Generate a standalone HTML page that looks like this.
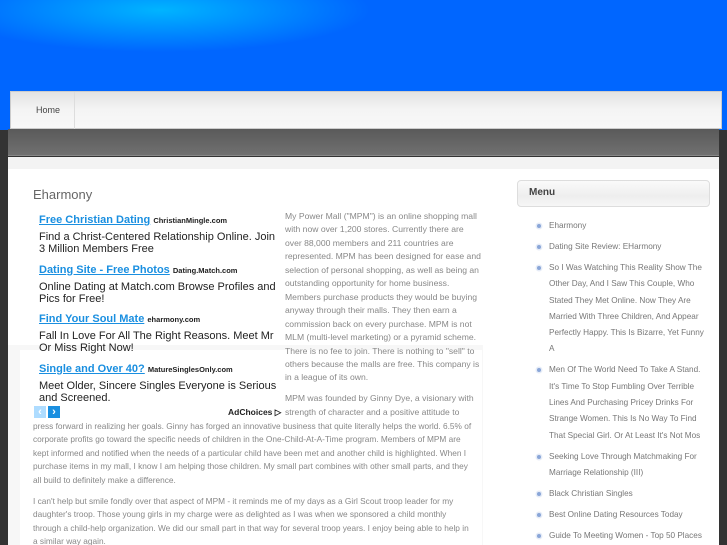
<!DOCTYPE html>
<html><head><style>
*{margin:0;padding:0;box-sizing:border-box}
html,body{width:727px;height:545px;overflow:hidden}
body{background:#333;font-family:"Liberation Sans",sans-serif;position:relative}
.top{position:absolute;left:0;top:0;width:727px;height:130px;background:radial-gradient(ellipse 300px 60px at 160px 10px,#00b4ff,#0066ff 70%),#0060ff}
.nav{position:absolute;left:10px;top:91px;width:712px;height:38px;background:linear-gradient(#e2e2e2,#f4f4f4 50%,#f8f8f8);border:1px solid #ccc}
.nav span{position:absolute;left:25px;top:13px;font-size:9px;color:#444}
.nav i{position:absolute;left:63px;top:0;width:1px;height:37px;background:#ddd}
.band{position:absolute;left:8px;top:129px;width:711px;height:27px;background:linear-gradient(#5a5a5a,#707070);border-bottom:1px solid #888}
.strip{position:absolute;left:8px;top:157px;width:711px;height:12px;background:#f3f3f3}
.page{position:absolute;left:8px;top:169px;width:711px;height:376px;background:#fff}
.gp{position:absolute;left:8px;top:345px;width:475px;height:200px;background:#f7f7f7}
.gp2{position:absolute;left:20px;top:350px;width:462px;height:195px;background:#fff}
h1{position:absolute;left:33px;top:187px;font-size:13px;font-weight:normal;color:#666}
.ad{position:absolute;left:39px;top:214px;width:245px;font-size:11px;color:#222;line-height:12px}
.ad a{color:#1a8fe0;font-weight:bold;font-size:11px;text-decoration:underline}
.ad small{font-size:7.5px;font-weight:bold;color:#222}
.ad p{margin-bottom:8.5px}
.ad .d{margin-top:4px;display:block}
.rt{position:absolute;left:285px;top:210px;width:196px;font-size:8.6px;color:#888;line-height:13.45px}
.rt p{margin-bottom:7.5px}
.bt{position:absolute;left:33px;top:420px;width:440px;font-size:8.3px;color:#888;line-height:13.45px}
.bt p{margin-bottom:7.5px}
.arr{position:absolute;top:406px;width:12px;height:12px;color:#fff;font-size:11px;font-weight:bold;text-align:center;line-height:12px}
.adc{position:absolute;left:228px;top:407px;font-size:8.5px;font-weight:bold;color:#222}
.menu{position:absolute;left:517px;top:180px;width:193px;height:27px;border:1px solid #ddd;border-radius:4px;background:linear-gradient(#fafafa,#eee 60%,#f6f6f6)}
.menu b{position:absolute;left:11px;top:6px;font-size:10px;color:#444}
ul{position:absolute;left:549px;top:218px;width:162px;list-style:none;font-size:8.2px;color:#777;line-height:16.3px}
li{margin-bottom:4.7px;position:relative}
li:before{content:"";position:absolute;left:-12px;top:6px;width:4px;height:4px;border-radius:50%;background:#8aa6d8;box-shadow:0 0 0 1.5px #e6ecf7}
</style></head><body>
<div class="top"></div>
<div class="nav"><span>Home</span><i></i></div>
<div class="band"></div>
<div class="strip"></div>
<div class="page"></div>
<div class="gp"></div><div class="gp2"></div>
<h1>Eharmony</h1>
<div class="ad">
<p><a>Free Christian Dating</a> <small>ChristianMingle.com</small><span class="d">Find a Christ-Centered Relationship Online. Join 3 Million Members Free</span></p>
<p><a>Dating Site - Free Photos</a> <small>Dating.Match.com</small><span class="d">Online Dating at Match.com Browse Profiles and Pics for Free!</span></p>
<p><a>Find Your Soul Mate</a> <small>eharmony.com</small><span class="d">Fall In Love For All The Right Reasons. Meet Mr Or Miss Right Now!</span></p>
<p><a>Single and Over 40?</a> <small>MatureSinglesOnly.com</small><span class="d">Meet Older, Sincere Singles Everyone is Serious and Screened.</span></p>
</div>
<div class="arr" style="left:34px;background:#aedcff">‹</div>
<div class="arr" style="left:48px;background:#1a8fe0">›</div>
<div class="adc">AdChoices ▷</div>
<div class="rt">
<p>My Power Mall ("MPM") is an online shopping mall with now over 1,200 stores. Currently there are over 88,000 members and 211 countries are represented. MPM has been designed for ease and selection of personal shopping, as well as being an outstanding opportunity for home business. Members purchase products they would be buying anyway through their malls. They then earn a commission back on every purchase. MPM is not MLM (multi-level marketing) or a pyramid scheme. There is no fee to join. There is nothing to "sell" to others because the malls are free. This company is in a league of its own.</p>
<p>MPM was founded by Ginny Dye, a visionary with strength of character and a positive attitude to</p>
</div>
<div class="bt">
<p>press forward in realizing her goals. Ginny has forged an innovative business that quite literally helps the world. 6.5% of corporate profits go toward the specific needs of children in the One-Child-At-A-Time program. Members of MPM are kept informed and notified when the needs of a particular child have been met and another child is highlighted. When I purchase items in my mall, I know I am helping those children. My small part combines with other small parts, and they all build to definitely make a difference.</p>
<p>I can't help but smile fondly over that aspect of MPM - it reminds me of my days as a Girl Scout troop leader for my daughter's troop. Those young girls in my charge were as delighted as I was when we sponsored a child monthly through a child-help organization. We did our small part in that way for several troop years. I enjoy being able to help in a similar way again.</p>
</div>
<div class="menu"><b>Menu</b></div>
<ul>
<li>Eharmony</li>
<li>Dating Site Review: EHarmony</li>
<li>So I Was Watching This Reality Show The Other Day, And I Saw This Couple, Who Stated They Met Online. Now They Are Married With Three Children, And Appear Perfectly Happy. This Is Bizarre, Yet Funny A</li>
<li>Men Of The World Need To Take A Stand. It's Time To Stop Fumbling Over Terrible Lines And Purchasing Pricey Drinks For Strange Women. This Is No Way To Find That Special Girl. Or At Least It's Not Mos</li>
<li>Seeking Love Through Matchmaking For Marriage Relationship (III)</li>
<li>Black Christian Singles</li>
<li>Best Online Dating Resources Today</li>
<li>Guide To Meeting Women - Top 50 Places</li>
</ul>
</body></html>
